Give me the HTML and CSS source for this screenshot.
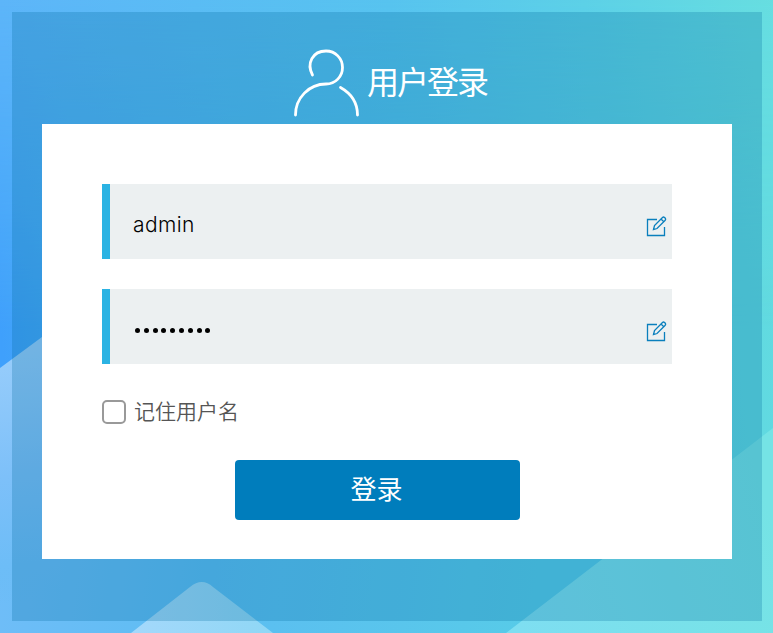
FILE: index.html
```html
<!DOCTYPE html>
<html lang="zh-CN">
<head>
<meta charset="utf-8">
<title>用户登录</title>
<link rel="stylesheet" href="styles.css">
</head>
<body>
<svg class="backdrop" viewBox="0 0 773 633" preserveAspectRatio="none" aria-hidden="true">
  <defs>
    <linearGradient id="base" gradientUnits="userSpaceOnUse" x1="0" y1="330" x2="773" y2="240">
      <stop offset="0" stop-color="#3fa0fc"/><stop offset=".12" stop-color="#48aef4"/><stop offset=".5" stop-color="#52c2eb"/><stop offset="1" stop-color="#62dbe0"/>
    </linearGradient>
    <linearGradient id="top" gradientUnits="userSpaceOnUse" x1="0" y1="0" x2="773" y2="-60">
      <stop offset="0" stop-color="#5db5f9"/><stop offset=".5" stop-color="#57c3ef"/><stop offset=".75" stop-color="#5cd0e7"/><stop offset="1" stop-color="#67dee0"/>
    </linearGradient>
    <linearGradient id="fade" x1="0" y1="0" x2="0" y2="1">
      <stop offset="0" stop-color="#fff"/><stop offset="1" stop-color="#fff" stop-opacity="0"/>
    </linearGradient>
    <mask id="topmask"><path fill="url(#fade)" d="M0 0H773V330H0Z"/></mask>
    <linearGradient id="left" gradientUnits="userSpaceOnUse" x1="10" y1="350" x2="40" y2="600">
      <stop offset="0" stop-color="#98cdfb"/><stop offset=".5" stop-color="#7dc0f9"/><stop offset=".85" stop-color="#6dbdf7"/><stop offset="1" stop-color="#6abcf6" stop-opacity="0"/>
    </linearGradient>
    <linearGradient id="bottom" gradientUnits="userSpaceOnUse" x1="0" y1="560" x2="530" y2="633">
      <stop offset="0" stop-color="#6fbdf8"/><stop offset=".4" stop-color="#5cbdf2"/><stop offset="1" stop-color="#57cbe8"/>
    </linearGradient>
    <linearGradient id="peak" gradientUnits="userSpaceOnUse" x1="130" y1="0" x2="275" y2="0">
      <stop offset="0" stop-color="#a4d8fb"/><stop offset="1" stop-color="#8fd7f5"/>
    </linearGradient>
    <linearGradient id="right" gradientUnits="userSpaceOnUse" x1="510" y1="600" x2="773" y2="520">
      <stop offset="0" stop-color="#7edef1"/><stop offset="1" stop-color="#75e3e5"/>
    </linearGradient>
  </defs>
  <path fill="url(#base)" d="M0 0H773V633H0Z"/>
  <path fill="url(#top)" mask="url(#topmask)" d="M0 0H773V330H0Z"/>
  <path fill="url(#bottom)" d="M0 500H700V633H0Z"/>
  <path fill="url(#left)" d="M0 368L42 337L60 324V633H0Z"/>
  <path fill="url(#peak)" d="M131 633L190 587Q202 577 213 587L273 633Z"/>
  <path fill="url(#right)" d="M506 633L605 557L773 428V633Z"/>
</svg>
<main class="panel">
  <header class="heading">
    <svg class="user" viewBox="0 0 70 70" aria-hidden="true">
      <path d="M20.5 27C14.3 15.5 20.5 3 34 3c9.500 0 16.500 7.500 16.500 16.500C50.500 28.500 43.500 36 34 36 17 36 3.500 50 3.500 67M48.500 39.500C60 46 65.500 55 65.500 67"/>
    </svg>
    <h1>用户登录</h1>
  </header>
  <form class="card">
    <div class="field">
      <span class="value">admin</span>
      <svg class="edit" viewBox="0 0 24 24" aria-hidden="true"><path d="M13 5.500H3.500V21.500H20.500V13"/><path d="M9.500 15.500L10.500 11.500L18.500 3.500Q19.500 2.500 20.500 3.500L21.500 4.500Q22 5.500 21 6.500L13 14.500ZM17 5L20 8"/></svg>
    </div>
    <div class="field">
      <span class="dots"><i></i><i></i><i></i><i></i><i></i><i></i><i></i><i></i><i></i></span>
      <svg class="edit" viewBox="0 0 24 24" aria-hidden="true"><path d="M13 5.500H3.500V21.500H20.500V13"/><path d="M9.500 15.500L10.500 11.500L18.500 3.500Q19.500 2.500 20.500 3.500L21.500 4.500Q22 5.500 21 6.500L13 14.500ZM17 5L20 8"/></svg>
    </div>
    <label class="remember"><span class="box"></span><span class="label">记住用户名</span></label>
    <button class="submit" type="button">登录</button>
  </form>
</main>
</body>
</html>
```
FILE: styles.css
```css
* { box-sizing: border-box; }
body {
  margin: 0;
  height: 633px;
  padding: 12px 11px 12px 12px;
  overflow: hidden;
  font-family: "Noto Sans CJK SC", sans-serif;
}
.backdrop {
  position: absolute;
  inset: 0;
  width: 773px;
  height: 633px;
}
.panel {
  position: relative;
  height: 609px;
  padding: 0 30px;
  background: rgba(0, 105, 155, .25);
}
.heading {
  display: flex;
  height: 112px;
  padding: 36px 0 0 250px;
  color: #fff;
}
.user {
  width: 70px;
  height: 70px;
  fill: none;
  stroke: #fff;
  stroke-width: 2.8;
  stroke-linecap: round;
}
h1 {
  margin: 0 0 0 5px;
  font-size: 32px;
  font-weight: 400;
  line-height: 65px;
  letter-spacing: -2px;
}
.card {
  height: 435px;
  padding: 60px;
  background: #fff;
}
.field {
  display: flex;
  align-items: center;
  justify-content: space-between;
  height: 75px;
  margin-bottom: 30px;
  padding: 8px 4px 0 23px;
  border-left: 8px solid #2bb3e3;
  background: #ecf0f1;
  color: #000;
  font: 300 21px/30px Inter, sans-serif;
  letter-spacing: .4px;
}
.value { padding-bottom: 1px; }
.dots {
  display: flex;
  gap: 3.8px;
  padding: 0 0 0 2px;
}
.dots i {
  width: 5px;
  height: 5px;
  border-radius: 50%;
  background: #000;
}
.edit {
  width: 24px;
  height: 24px;
  fill: none;
  stroke: #0a7fbd;
  stroke-width: 1.3;
}
.remember {
  display: flex;
  align-items: center;
  gap: 8px;
  height: 36px;
  color: #555;
  font-size: 21px;
  font-weight: 350;
}
.label { padding-bottom: 4px; }
.box {
  width: 24px;
  height: 24px;
  border: 2px solid #999;
  border-radius: 5px;
}
.submit {
  display: block;
  width: 285px;
  height: 60px;
  margin: 30px 0 0 133px;
  padding: 0 2px 5px 0;
  border: 0;
  border-radius: 4px;
  background: #007dbc;
  color: #fff;
  font: 26px "Noto Sans CJK SC", sans-serif;
}
```
